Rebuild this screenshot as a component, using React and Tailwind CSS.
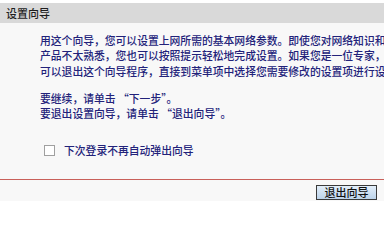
import React, { useState } from "react";

const cjk = { fontFamily: '"Noto Sans CJK SC", "Noto Sans", sans-serif' };

const intro = [
  "用这个向导，您可以设置上网所需的基本网络参数。即使您对网络知识和",
  "产品不太熟悉，您也可以按照提示轻松地完成设置。如果您是一位专家，您",
  "可以退出这个向导程序，直接到菜单项中选择您需要修改的设置项进行设置。",
];

const App = () => {
  const [noPopup, setNoPopup] = useState(false);

  return (
    <div
      className="w-[384px] h-[201px] overflow-hidden bg-white pt-[3px] flex flex-col"
      style={cjk}
    >
      {/* header */}
      <div className="h-[20px] shrink-0 bg-[#d9d9d9] pl-[6px] flex items-center text-[11px] font-medium text-[#1e1e1e]">
        设置向导
      </div>

      {/* body */}
      <div className="flex-1 bg-[#f8f8f8] flex flex-col">
        <div className="pl-[40px] pt-[9.5px] text-[10.8px] leading-[15.5px] font-medium text-[#22227a] whitespace-nowrap">
          {intro.map((line) => (
            <p key={line}>{line}</p>
          ))}

          <p className="mt-[11.5px]">要继续，请单击 “下一步”。</p>
          <p>要退出设置向导，请单击 “退出向导”。</p>

          <label className="mt-[21px] -ml-[36px] pl-[40px] flex items-center gap-[9px] cursor-pointer">
            <input
              type="checkbox"
              checked={noPopup}
              onChange={(e) => setNoPopup(e.target.checked)}
              className="appearance-none w-[11px] h-[11px] border border-[#a0a0a0] bg-white checked:bg-[#4a6fb5]"
            />
            <span>下次登录不再自动弹出向导</span>
          </label>
        </div>

        <div className="mt-[21px] h-px bg-[#c9605a]" />

        <div className="flex justify-end pr-[7px] pt-[5px]">
          <button className="w-[61px] h-[15px] border border-[#3a3a3a] bg-gradient-to-b from-[#e3eef9] to-[#bcd3ea] text-[11px] leading-[13px] font-medium text-[#111111]">
            退出向导
          </button>
        </div>
      </div>
    </div>
  );
};

export default App;
